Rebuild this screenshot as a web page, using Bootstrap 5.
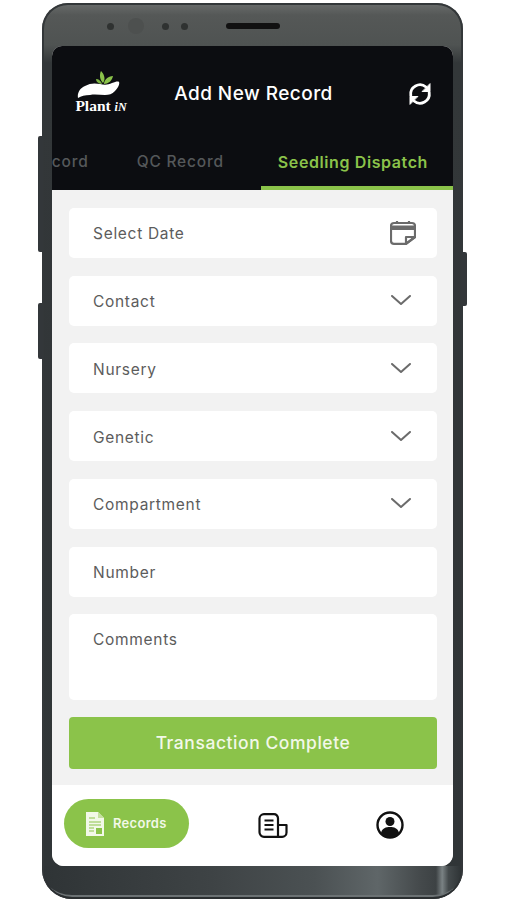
<!DOCTYPE html>
<html lang="en">

<head>
    <meta charset="UTF-8">
    <meta name="viewport" content="width=device-width, initial-scale=1.0">
    <title>Add New Record | Plant iN</title>
    <link href="https://cdn.jsdelivr.net/npm/bootstrap@5.3.0/dist/css/bootstrap.min.css" rel="stylesheet">
    <style>
        html, body { height: 900px; overflow: hidden; }
        body { background: #fff; font-family: Inter, "Liberation Sans", sans-serif; }
        .phone-wrap { width: 421px; height: 896px; margin: 3px 0 0 42px; position: relative; }
        .side-key { position: absolute; width: 5px; background: #33373a; }
        .key-a { left: -4px; top: 133px; height: 116px; border-radius: 2px 0 0 2px; }
        .key-b { left: -4px; top: 300px; height: 56px; border-radius: 2px 0 0 2px; }
        .key-c { right: -4px; top: 249px; height: 54px; border-radius: 0 2px 2px 0; }
        .phone-shell { height: 100%; padding: 0 10px; overflow: hidden; border-radius: 26px 26px 30px 30px; background: linear-gradient(#6a6d6c, #555857 12px, #4f5352 42px, #333739 60px, #303537); box-shadow: inset 0 0 0 2px #333739; }
        .phone-top { height: 43px; padding: 3px 0 0 55px; }
        .cam-dot { width: 7px; height: 7px; border-radius: 50%; background: #2f3231; }
        .cam-ring { width: 16px; height: 16px; border-radius: 50%; background: #4d504f; margin: 0 18px 0 14px; }
        .cam-dot.tight { margin-right: 12px; }
        .speaker { width: 54px; height: 6px; border-radius: 3px; background: #111; margin-left: 38px; }
        .phone-screen { height: 820px; border-radius: 10px 10px 12px 12px; overflow: hidden; background: #f2f2f2; }
        .phone-chin { height: 33px; margin: 0 -8px; border-radius: 0 0 28px 28px; border-bottom: 2px solid #2a2e30; box-shadow: inset 0 -7px 0 -5px #6c7274; background: linear-gradient(90deg, #2f3436, #3e4345 40%, #4b5153 65%, #5f6668 80%, #454a4c 90%, #3d4244 94%, #7a8284 95.5%, #444a4c 97%, #2f3436); }
        .app-header { height: 144px; background: #0c0d11; }
        .title-row { height: 97px; padding: 0 20px 1px 22px; }
        .app-title { color: #fff; font-size: 19px; font-weight: 500; letter-spacing: .45px; margin: 0; }
        .logo-box { width: 54px; margin-bottom: 5px; line-height: 1; color: #fff; font-family: "Liberation Serif", serif; font-weight: 700; font-size: 15.5px; white-space: nowrap; }
        .logo-in { font-size: 12px; font-style: italic; }
        .refresh-box { width: 54px; }
        .tab-row { height: 47px; overflow: hidden; font-size: 15.5px; font-weight: 500; letter-spacing: .8px; white-space: nowrap; }
        .tab-item { color: #55585a; padding: 0 37px 0 11px; height: 47px; line-height: 38px; }
        .tab-item.active-tab { color: #8bc34a; font-size: 16px; font-weight: 600; letter-spacing: .6px; border-bottom: 4px solid #8bc34a; padding: 0 25px 0 17px; }
        .form-area { padding: 18px 16px 0 17px; height: 595px; gap: 17.72px; }
        .field-box { height: 50px; flex-shrink: 0; border-radius: 5px; background: #fff; padding-right: 26px; }
        .field-box .form-control { background: transparent; border: 0; box-shadow: none; padding: 2px 0 0 24px; font-size: 15.5px; letter-spacing: .7px; color: #555; }
        .form-control::placeholder { color: #5c5c5c; opacity: 1; }
        .field-cal { padding-right: 21px; }
        .field-tall { height: 86px; padding-top: 15px; }
        .field-tall textarea.form-control { height: 60px; min-height: 0; resize: none; line-height: 18px; }
        .btn-finish { height: 52px; flex-shrink: 0; margin-top: -1px; background: #8bc34a; border: 0; border-radius: 4px; color: #f2f8e8; font-size: 17.5px; font-weight: 500; letter-spacing: .55px; }
        .btn-finish:hover { background: #7fb540; color: #fff; }
        .bottom-bar { height: 81px; background: #fff; padding-left: 12px; }
        .pill-link { width: 125px; height: 49px; margin-bottom: 5px; gap: 8px; padding: 2px 0 0 21px; border-radius: 25px; background: #8bc34a; color: #f2f8e8; font-size: 13px; font-weight: 600; letter-spacing: .3px; text-decoration: none; }
        .bar-icons { margin-bottom: 1px; }
        .icon-doc { margin-left: 69px; }
        .icon-user { margin-left: 88px; }
    </style>
</head>

<body>
    <div class="phone-wrap">
        <span class="side-key key-a"></span>
        <span class="side-key key-b"></span>
        <span class="side-key key-c"></span>
        <div class="phone-shell">
            <div class="phone-top d-flex align-items-center">
                <span class="cam-dot"></span>
                <span class="cam-ring"></span>
                <span class="cam-dot tight"></span>
                <span class="cam-dot"></span>
                <span class="speaker"></span>
            </div>

            <div class="phone-screen d-flex flex-column">
                <!-- Header -->
                <div class="app-header">
                    <div class="title-row d-flex align-items-center justify-content-between">
                        <div class="logo-box text-center">
                            <svg width="54" height="28" viewBox="0 0 54 28" class="d-block">
                                <path d="M4 28c-1-5 2-10 7-12 5-3 10-3 15-2 4 1 8 1 12-1 3-1 6-2 7-1 1 2-1 6-4 9-3 3-6 4-10 4-5 0-10-1-15 0-5 0-9 1-12 3z" fill="#fff"/>
                                <path d="M29 13c-3-3-4-8-2-12 3 3 5 8 2 12z" fill="#8bc34a"/>
                                <path d="M30 14c0-4 4-8 9-8-1 5-5 8-9 8z" fill="#8bc34a"/>
                                <path d="M28 14c-1-3-3-5-6-5 0 3 3 5 6 5z" fill="#7cb342"/>
                            </svg>
                            <div>Plant <span class="logo-in">iN</span></div>
                        </div>
                        <h1 class="app-title">Add New Record</h1>
                        <div class="refresh-box d-flex justify-content-end">
                            <svg width="26" height="26" viewBox="0 0 26 26" fill="none" stroke="#fff" stroke-width="2.800" stroke-linecap="round" class="d-block">
                                <path d="M3.800 14.500A9.300 9.300 0 0 1 19 6"/>
                                <path d="M23 3v7.500h-7.500z" fill="#fff" stroke-width="1" stroke-linejoin="round"/>
                                <path d="M22.200 11.500A9.300 9.300 0 0 1 7 20"/>
                                <path d="M3 23v-7.500h7.500z" fill="#fff" stroke-width="1" stroke-linejoin="round"/>
                            </svg>
                        </div>
                    </div>
                    <div class="tab-row d-flex justify-content-end">
                        <div class="tab-item">Inventory Record</div>
                        <div class="tab-item">QC Record</div>
                        <div class="tab-item active-tab">Seedling Dispatch</div>
                    </div>
                </div>

                <!-- Form -->
                <form class="form-area d-flex flex-column">
                    <div class="field-box field-cal d-flex align-items-center">
                        <input type="text" class="form-control" placeholder="Select Date">
                        <svg width="26" height="24" viewBox="0 0 26 24" fill="none" stroke="#6b6b6b" stroke-width="2.200" stroke-linejoin="round" class="flex-shrink-0">
                            <path d="M16 22.800H4a3 3 0 0 1-3-3V5a3 3 0 0 1 3-3h18a3 3 0 0 1 3 3v11z"/>
                            <path d="M1 5.500h24V8H1z" fill="#6b6b6b"/>
                            <path d="M7 0v3M19 0v3"/>
                            <path d="M16 22.800V16h9z"/>
                        </svg>
                    </div>
                    <div class="field-box d-flex align-items-center">
                        <input type="text" class="form-control" placeholder="Contact">
                        <svg width="20" height="11" viewBox="0 0 20 11" fill="none" stroke="#6b6b6b" stroke-width="2" stroke-linecap="round" stroke-linejoin="round" class="flex-shrink-0"><path d="M1 1l9 8 9-8"/></svg>
                    </div>
                    <div class="field-box d-flex align-items-center">
                        <input type="text" class="form-control" placeholder="Nursery">
                        <svg width="20" height="11" viewBox="0 0 20 11" fill="none" stroke="#6b6b6b" stroke-width="2" stroke-linecap="round" stroke-linejoin="round" class="flex-shrink-0"><path d="M1 1l9 8 9-8"/></svg>
                    </div>
                    <div class="field-box d-flex align-items-center">
                        <input type="text" class="form-control" placeholder="Genetic">
                        <svg width="20" height="11" viewBox="0 0 20 11" fill="none" stroke="#6b6b6b" stroke-width="2" stroke-linecap="round" stroke-linejoin="round" class="flex-shrink-0"><path d="M1 1l9 8 9-8"/></svg>
                    </div>
                    <div class="field-box d-flex align-items-center">
                        <input type="text" class="form-control" placeholder="Compartment">
                        <svg width="20" height="11" viewBox="0 0 20 11" fill="none" stroke="#6b6b6b" stroke-width="2" stroke-linecap="round" stroke-linejoin="round" class="flex-shrink-0"><path d="M1 1l9 8 9-8"/></svg>
                    </div>
                    <div class="field-box d-flex align-items-center">
                        <input type="text" class="form-control" placeholder="Number">
                    </div>
                    <div class="field-box field-tall">
                        <textarea class="form-control" placeholder="Comments"></textarea>
                    </div>
                    <button type="button" class="btn btn-finish w-100">Transaction Complete</button>
                </form>

                <!-- Bottom nav -->
                <div class="bottom-bar d-flex align-items-center">
                    <a href="#" class="pill-link d-flex align-items-center">
                        <svg width="20" height="24" viewBox="0 0 20 24" class="flex-shrink-0">
                            <path d="M1 0h12l6 6v18H1z" fill="#f2f8e8"/>
                            <path d="M13 0v6h6z" fill="#c5e09f"/>
                            <path d="M4 6h6M4 10h12M4 13h12M4 16h5M4 19h5" stroke="#8bc34a" stroke-width="1.200"/>
                            <rect x="11" y="16" width="6" height="6" fill="#8bc34a"/>
                        </svg>
                        Records
                    </a>
                    <a href="#" class="bar-icons icon-doc d-block">
                        <svg width="30" height="25" viewBox="0 0 30 25" fill="none" stroke="#111" stroke-width="2.200" stroke-linejoin="round" class="d-block">
                            <path d="M6 1.200h10a4 4 0 0 1 4 4V23.800H6a4.500 4.500 0 0 1-4.500-4.500V5.500A4.500 4.500 0 0 1 6 1.200z"/>
                            <path d="M20 12h8.500v7.500a4.300 4.300 0 0 1-4.300 4.300H20"/>
                            <path d="M6.500 7.500h9M6.500 12h9M6.500 16.500h9" stroke-width="2"/>
                        </svg>
                    </a>
                    <a href="#" class="bar-icons icon-user d-block">
                        <svg width="28" height="28" viewBox="0 0 28 28" class="d-block">
                            <circle cx="14" cy="14" r="12.500" fill="#fff" stroke="#111" stroke-width="2.400"/>
                            <circle cx="14" cy="10.500" r="4.500" fill="#111"/>
                            <path d="M5 22c1-5 5-6 9-6s8 1 9 6c-2 3-5 4.500-9 4.500S7 25 5 22z" fill="#111"/>
                        </svg>
                    </a>
                </div>
            </div>
            <div class="phone-chin"></div>
        </div>
    </div>

    <script src="https://cdn.jsdelivr.net/npm/bootstrap@5.3.0/dist/js/bootstrap.bundle.min.js"></script>
</body>

</html>
